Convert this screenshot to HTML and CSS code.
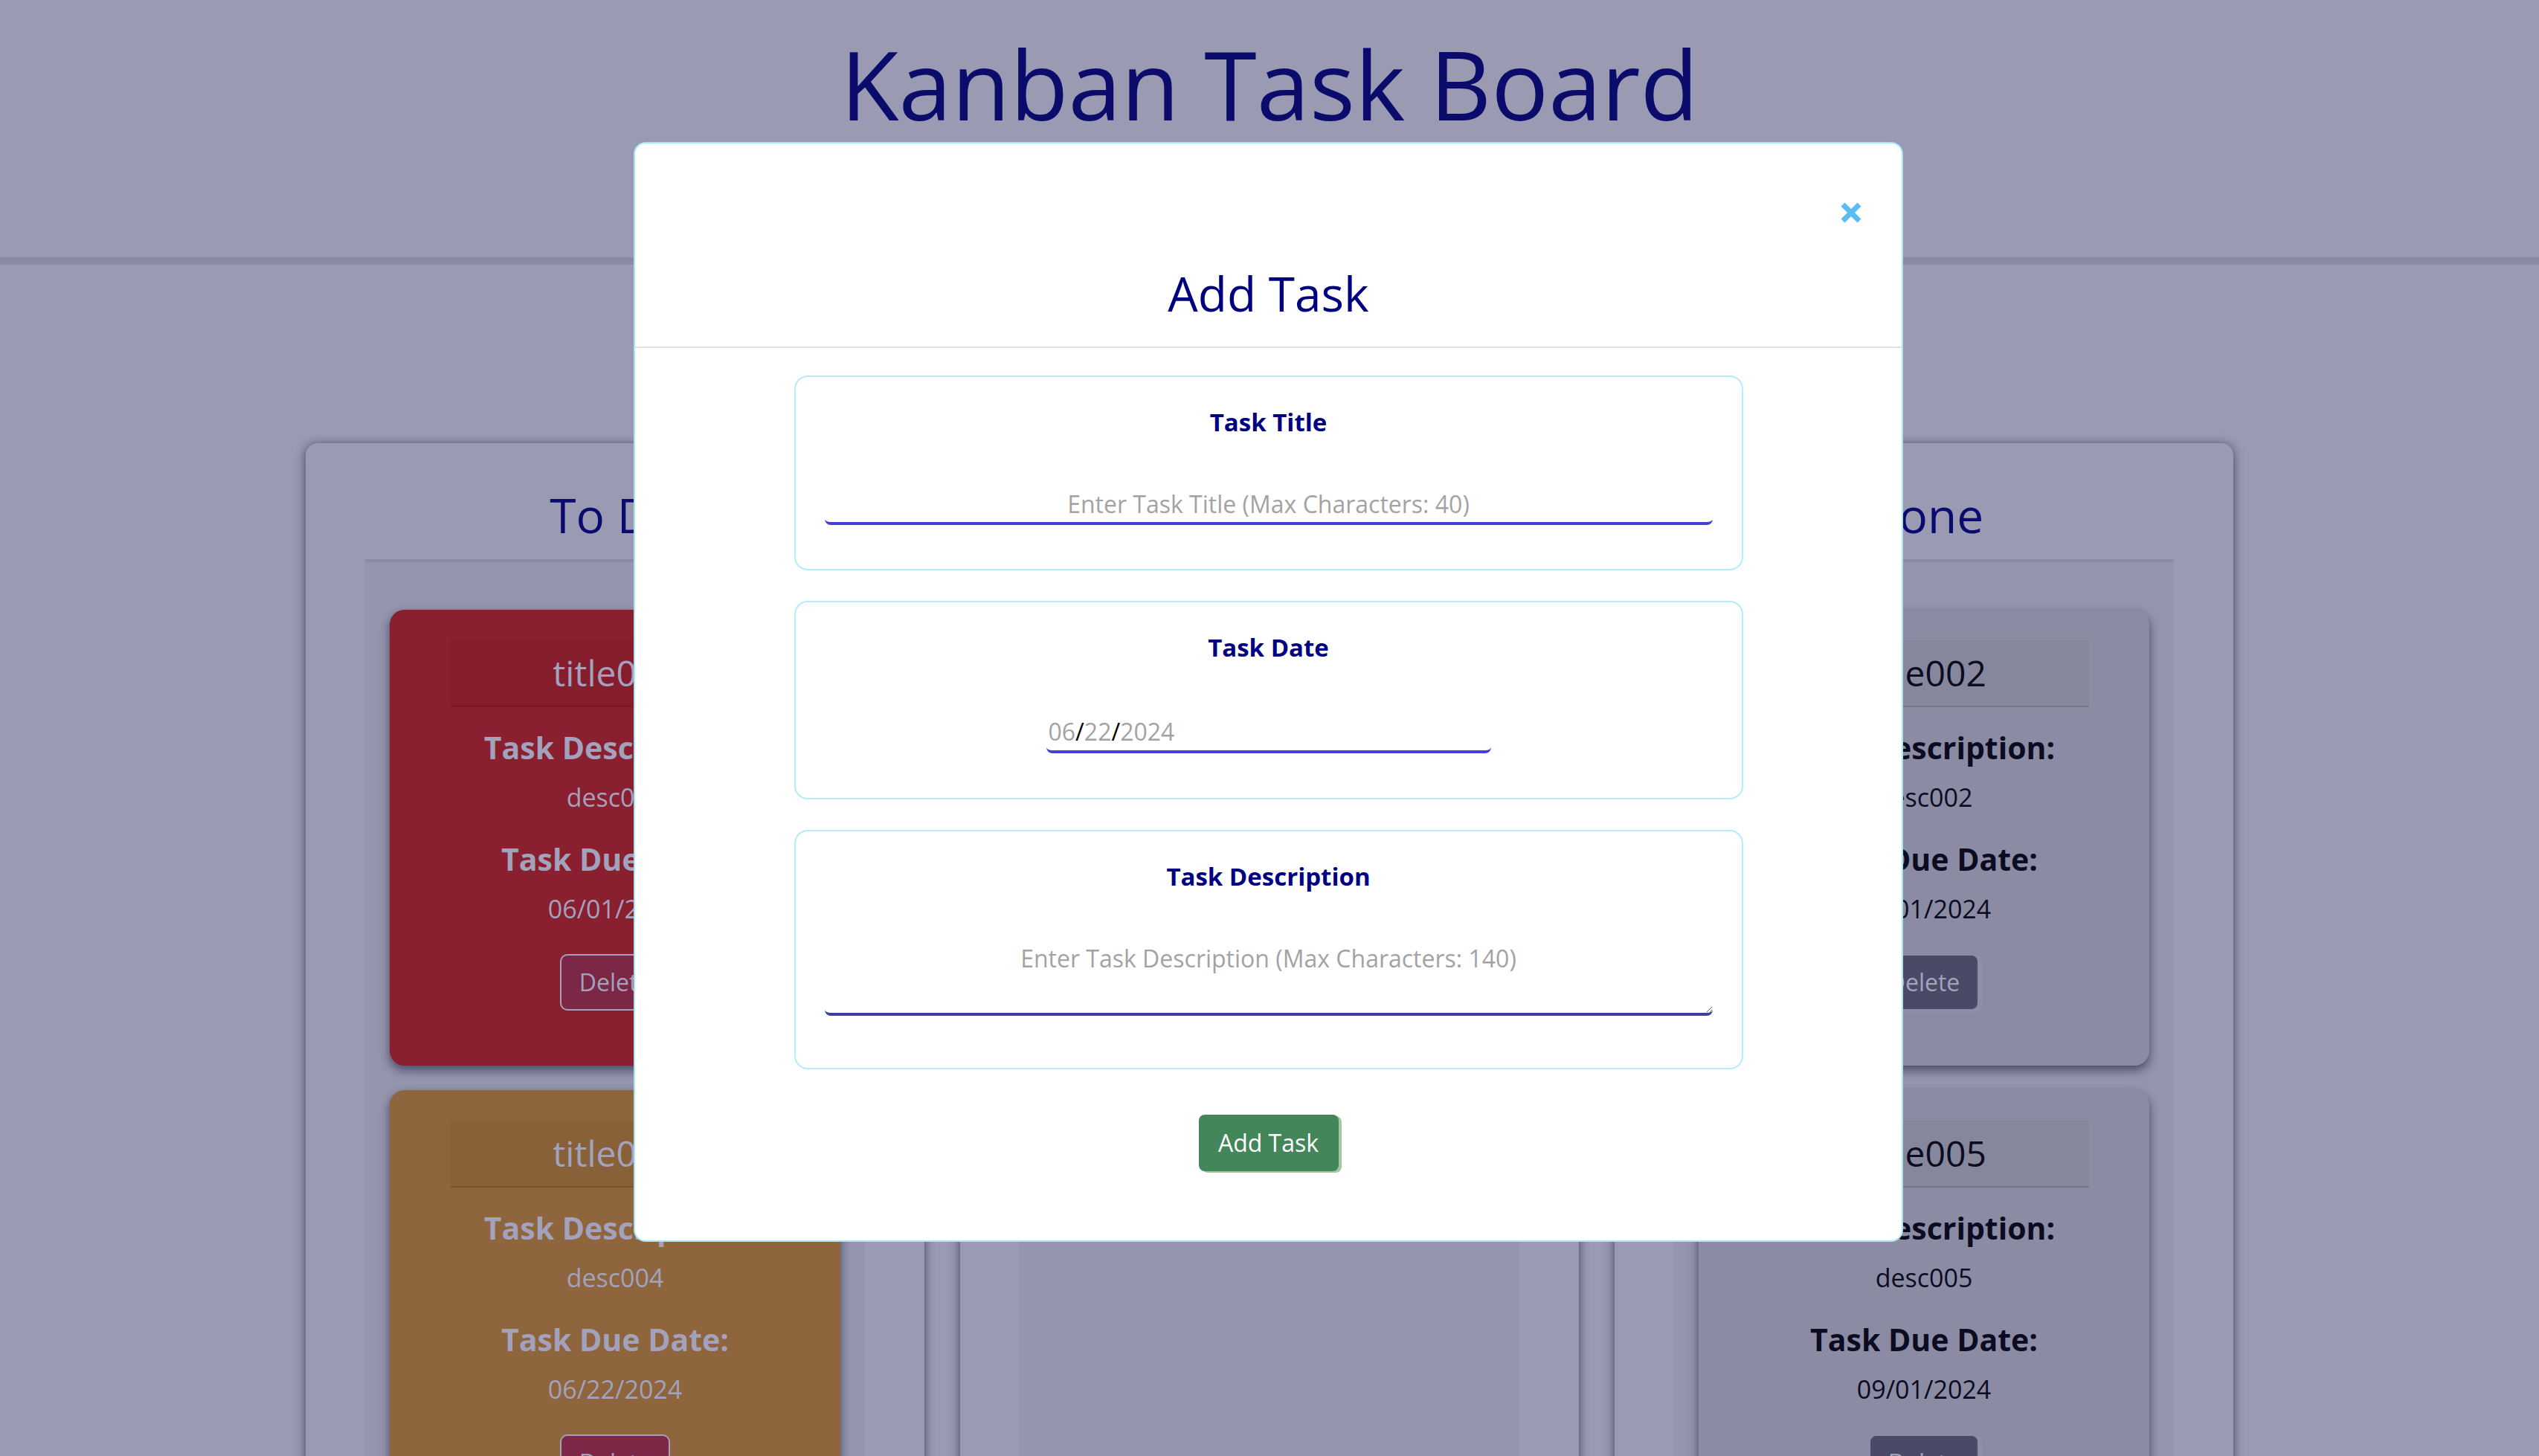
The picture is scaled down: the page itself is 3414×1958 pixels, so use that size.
FILE: index.html
```html
<!DOCTYPE html>
<html lang="en">
<head>
<meta charset="utf-8">
<title>Kanban Task Board</title>
<link rel="stylesheet" href="styles.css">
</head>
<body>
<header class="page-header">
  <h1 class="page-title">Kanban Task Board</h1>
</header>

<main class="board">
  <section class="lane">
    <h2 class="lane-title">To Do</h2>
    <div class="lane-body">
      <article class="task task-red">
        <div class="task-head"><h3 class="task-name">title001</h3></div>
        <h4 class="task-label">Task Description:</h4>
        <p class="task-text">desc001</p>
        <h4 class="task-label task-label-due">Task Due Date:</h4>
        <p class="task-text">06/01/2024</p>
        <button class="btn-delete btn-delete-red">Delete</button>
      </article>
      <article class="task task-orange">
        <div class="task-head"><h3 class="task-name">title004</h3></div>
        <h4 class="task-label">Task Description:</h4>
        <p class="task-text">desc004</p>
        <h4 class="task-label task-label-due">Task Due Date:</h4>
        <p class="task-text">06/22/2024</p>
        <button class="btn-delete btn-delete-red">Delete</button>
      </article>
    </div>
  </section>

  <section class="lane">
    <h2 class="lane-title">In Progress</h2>
    <div class="lane-body"></div>
  </section>

  <section class="lane">
    <h2 class="lane-title">Done</h2>
    <div class="lane-body">
      <article class="task task-done">
        <div class="task-head"><h3 class="task-name">title002</h3></div>
        <h4 class="task-label">Task Description:</h4>
        <p class="task-text">desc002</p>
        <h4 class="task-label task-label-due">Task Due Date:</h4>
        <p class="task-text">07/01/2024</p>
        <button class="btn-delete btn-delete-dark">Delete</button>
      </article>
      <article class="task task-done">
        <div class="task-head"><h3 class="task-name">title005</h3></div>
        <h4 class="task-label">Task Description:</h4>
        <p class="task-text">desc005</p>
        <h4 class="task-label task-label-due">Task Due Date:</h4>
        <p class="task-text">09/01/2024</p>
        <button class="btn-delete btn-delete-dark">Delete</button>
      </article>
    </div>
  </section>
</main>

<div class="modal">
  <div class="modal-header">
    <div class="close-row">
      <button class="close-btn" aria-label="Close">
        <svg width="40" height="40" viewBox="0 0 40 40" aria-hidden="true">
          <line x1="9" y1="9" x2="31" y2="31" stroke="#5bbcf5" stroke-width="7"/>
          <line x1="31" y1="9" x2="9" y2="31" stroke="#5bbcf5" stroke-width="7"/>
        </svg>
      </button>
    </div>
    <h2 class="modal-title">Add Task</h2>
  </div>
  <div class="modal-body">
    <div class="field-box">
      <label class="field-label" for="taskTitle">Task Title</label>
      <input class="text-input" id="taskTitle" type="text" placeholder="Enter Task Title (Max Characters: 40)">
    </div>
    <div class="field-box field-box-date">
      <label class="field-label">Task Date</label>
      <div class="date-field"><span class="date-part">06</span><span class="date-sep">/</span><span class="date-part">22</span><span class="date-sep">/</span><span class="date-part">2024</span></div>
    </div>
    <div class="field-box field-box-desc">
      <label class="field-label" for="taskDesc">Task Description</label>
      <textarea class="text-area" id="taskDesc" placeholder="Enter Task Description (Max Characters: 140)"></textarea>
    </div>
    <button class="btn-add">Add Task</button>
  </div>
</div>
</body>
</html>
```

FILE: styles.css
```css
* { box-sizing: border-box; }

html, body { margin: 0; padding: 0; }

body {
  background: #9a9ab2;
  font-family: "Open Sans", "Noto Sans", sans-serif;
  height: 1958px;
  overflow: hidden;
  position: relative;
}

/* ---------- page header ---------- */
.page-header {
  height: 356px;
  border-bottom: 10px solid #8a8aa3;
  text-align: center;
}

.page-title {
  margin: 0;
  padding-top: 36px;
  font-size: 128px;
  line-height: 154px;
  font-weight: 400;
  color: #0b0b6c;
}

/* ---------- board ---------- */
.board {
  width: 2592px;
  margin: 240px auto 0;
  display: grid;
  grid-template-columns: repeat(3, 1fr);
  gap: 48px;
}

.lane {
  background: #9a9ab2;
  border-radius: 16px;
  box-shadow: 0 2px 14px rgba(28, 28, 60, 0.7);
  min-height: 1600px;
  padding-top: 58px;
}

.lane-title {
  margin: 0 0 21px;
  text-align: center;
  font-size: 64px;
  line-height: 77px;
  font-weight: 400;
  color: #0a0a70;
  white-space: nowrap;
}

.lane-body {
  margin: 0 80px;
  border-top: 4px solid #8a8aa3;
  background: #9595ad;
  padding: 64px 33px 0;
  min-height: 1400px;
}

/* ---------- task cards ---------- */
.task {
  border-radius: 20px;
  padding: 41px 81px 74px;
  margin-bottom: 33px;
  text-align: center;
  box-shadow: 0 6px 14px rgba(22, 22, 52, 0.6);
}

.task-red { background: #8a1f2f; color: #a3a2bd; }
.task-orange { background: #8e653c; color: #a3a2bd; }
.task-done { background: #8b8ba3; color: #0b0b22; }

.task-head {
  height: 90px;
  display: flex;
  align-items: center;
  justify-content: center;
  background: rgba(0, 0, 0, 0.035);
  border-bottom: 2px solid rgba(0, 0, 0, 0.12);
}

.task-name {
  margin: 0;
  font-size: 48px;
  line-height: 1;
  font-weight: 400;
}

.task-label {
  margin: 30px 0 0;
  font-size: 41px;
  line-height: 49px;
  font-weight: 700;
}

.task-label-due { margin-top: 33px; }

.task-text {
  margin: 17px 0 0;
  font-size: 34px;
  line-height: 51px;
}

.btn-delete {
  margin-top: 35px;
  width: 148px;
  height: 76px;
  font-family: inherit;
  font-size: 32px;
  line-height: 48px;
  border-radius: 10px;
  color: #a3a2bd;
  padding: 0;
}

.btn-delete-red {
  background: #7b2745;
  border: 2px solid #a59fbb;
}

.btn-delete-dark {
  background: #4a4a66;
  border: 2px solid #8c8ca8;
  box-shadow: 4px 2px 0 #8e8eaa;
}

/* ---------- modal ---------- */
.modal {
  position: absolute;
  left: 852px;
  top: 191px;
  width: 1707px;
  background: #ffffff;
  border: 2px solid #a8e6f7;
  border-radius: 16px;
}

.modal-header {
  padding: 73px 48px 33px;
  border-bottom: 2px solid #dee2e6;
}

.close-row {
  display: flex;
  justify-content: flex-end;
  height: 40px;
}

.close-btn {
  width: 40px;
  height: 40px;
  padding: 0;
  border: 0;
  background: transparent;
  display: block;
}

.close-btn svg { display: block; }

.modal-title {
  margin: 50px 0 0;
  text-align: center;
  font-size: 64px;
  line-height: 77px;
  font-weight: 400;
  color: #000080;
}

.modal-body {
  padding: 37px 0 93px;
  text-align: center;
}

.field-box {
  width: 1276px;
  margin: 0 auto 41px;
  border: 2px solid #b4ecf9;
  border-radius: 18px;
  padding: 40px 39px 59px;
}

.field-box-date { padding-bottom: 60px; }

.field-box-desc {
  padding-bottom: 70px;
  margin-bottom: 61px;
}

.field-label {
  display: block;
  margin-bottom: 66px;
  font-size: 33px;
  line-height: 42px;
  font-weight: 700;
  color: #000080;
}

.text-input {
  display: block;
  width: 100%;
  height: 51px;
  padding: 0 8px 2px;
  border: 0;
  border-bottom: 4px solid #4141d5;
  border-radius: 8px;
  background: #fff;
  font-family: inherit;
  font-size: 32px;
  text-align: center;
  outline: none;
}

.text-input::placeholder,
.text-area::placeholder {
  color: #a3a3a3;
}

.date-field {
  width: 598px;
  height: 55px;
  margin: 0 auto;
  padding-left: 3px;
  border-bottom: 4px solid #4141d5;
  border-radius: 8px;
  text-align: left;
  font-size: 32px;
  line-height: 51px;
}

.date-part { color: #a3a3a3; }
.date-sep { color: #000000; }

.text-area {
  display: block;
  width: 100%;
  height: 100px;
  padding: 1px 8px;
  border: 0;
  border-bottom: 4px solid #3d3da0;
  border-radius: 8px;
  background: #fff;
  font-family: inherit;
  font-size: 32px;
  text-align: center;
  outline: none;
  resize: both;
}

.btn-add {
  width: 188px;
  height: 76px;
  padding: 0;
  border: 0;
  border-radius: 8px;
  background: #43865a;
  color: #ffffff;
  font-family: inherit;
  font-size: 32px;
  line-height: 48px;
  box-shadow: 4px 2px 0 #a0c89f;
}
```
